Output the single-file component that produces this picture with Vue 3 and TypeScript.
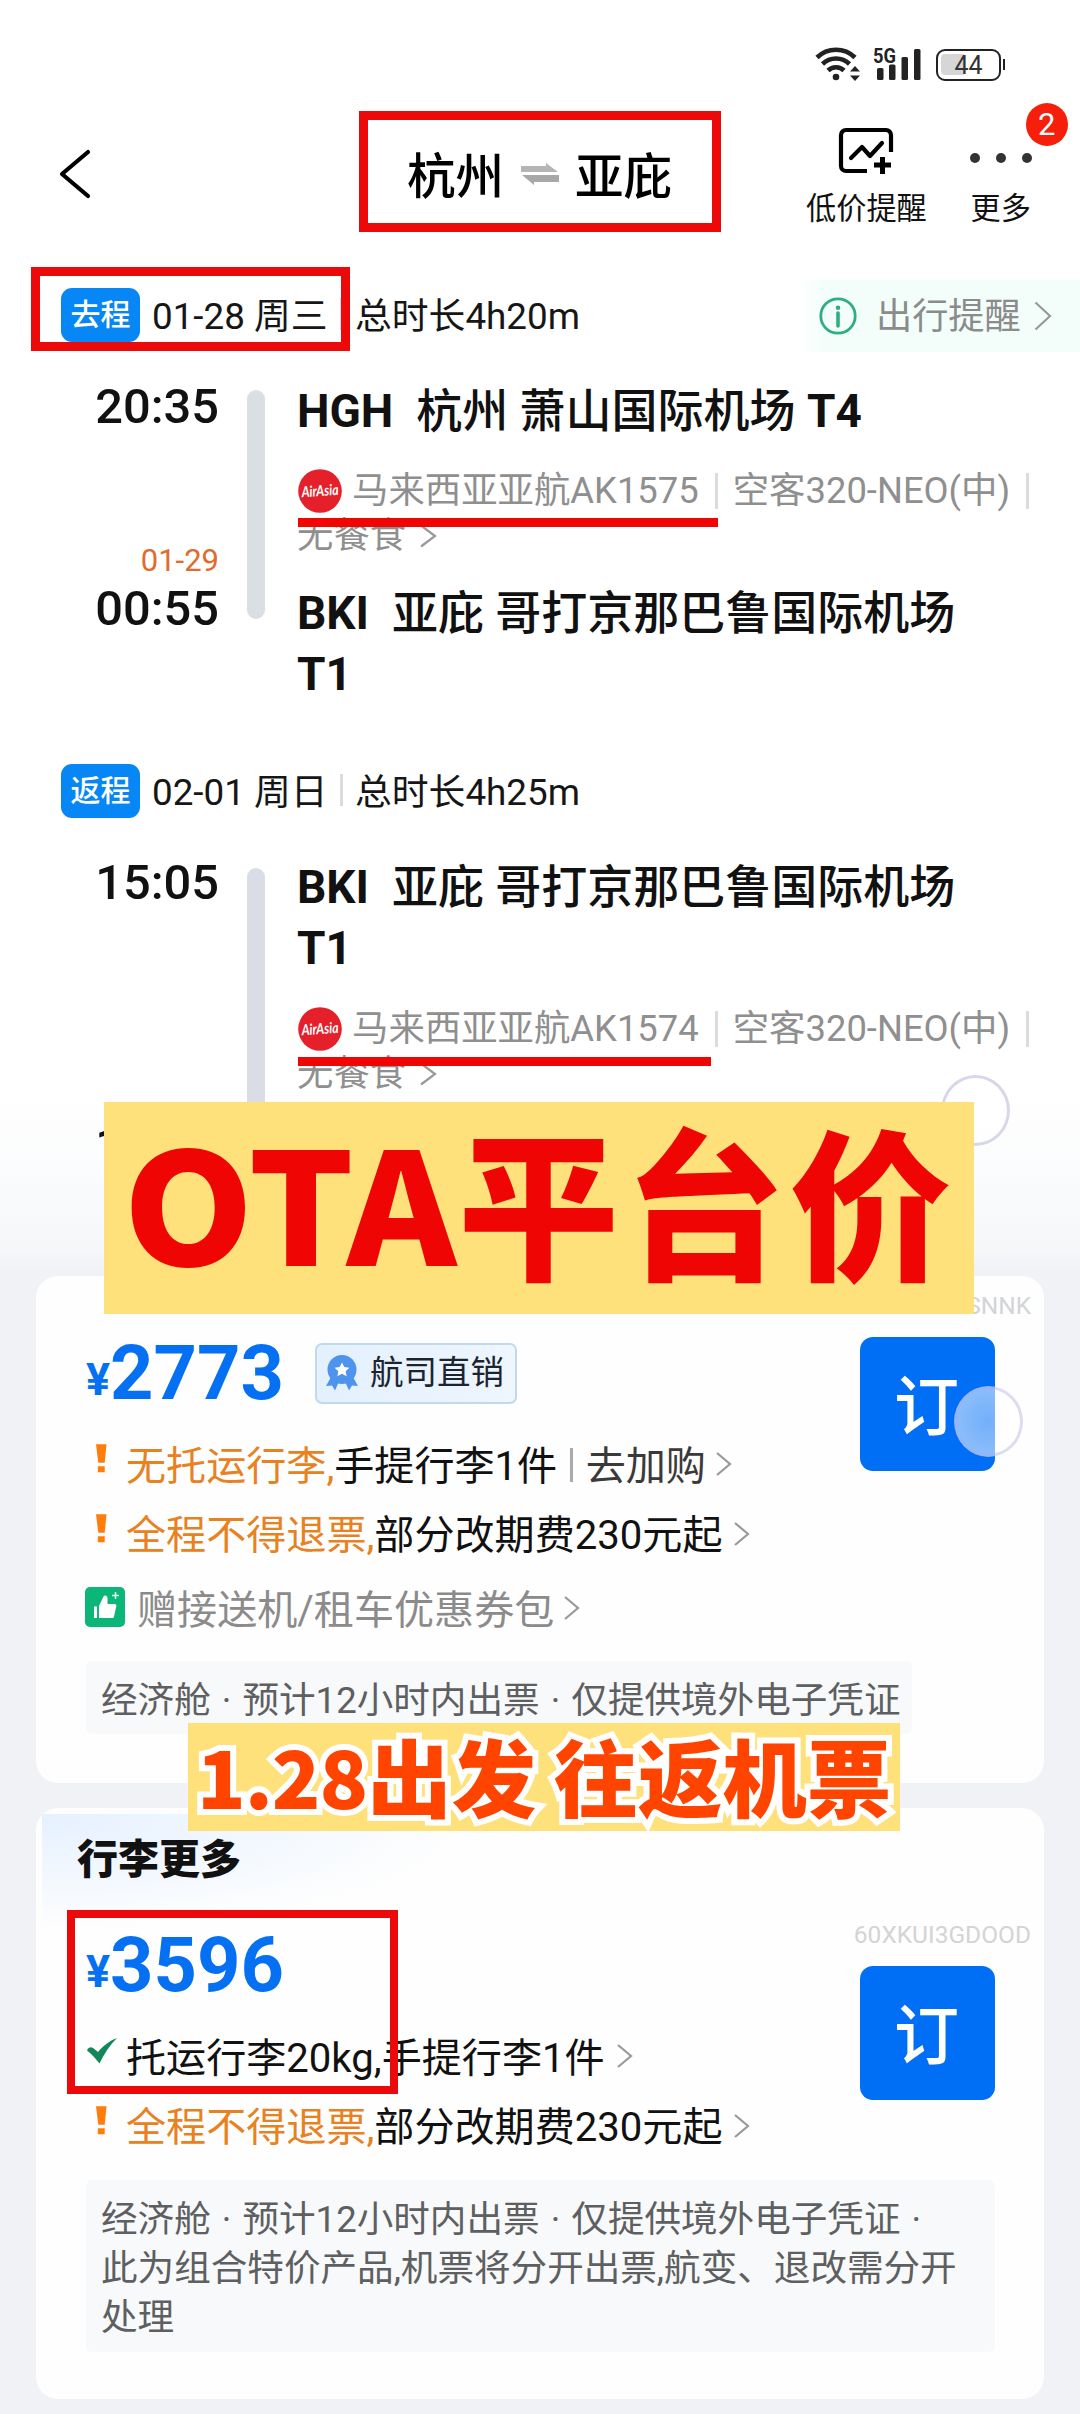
<script setup lang="ts">
interface Leg {
  kind: string
  date: string
  duration: string
  depart: string
  nextDay?: string
  arrive: string
  from: string[]
  to: string[]
  flight: string
}

interface FareLine {
  icon: 'warn' | 'check' | 'gift'
  accent?: string
  text: string
  link?: string
}

interface Fare {
  title?: string
  price: string
  badge?: string
  code: string
  lines: FareLine[]
  notes: string[]
}

const legs: Leg[] = [
  {
    kind: '去程',
    date: '01-28 周三',
    duration: '总时长4h20m',
    depart: '20:35',
    nextDay: '01-29',
    arrive: '00:55',
    from: ['HGH\u00a0 杭州 萧山国际机场 T4'],
    to: ['BKI\u00a0 亚庇 哥打京那巴鲁国际机场', 'T1'],
    flight: '马来西亚亚航AK1575',
  },
  {
    kind: '返程',
    date: '02-01 周日',
    duration: '总时长4h25m',
    depart: '15:05',
    arrive: '19:30',
    from: ['BKI\u00a0 亚庇 哥打京那巴鲁国际机场', 'T1'],
    to: [],
    flight: '马来西亚亚航AK1574',
  },
]

const fares: Fare[] = [
  {
    price: '2773',
    badge: '航司直销',
    code: 'SNNK',
    lines: [
      { icon: 'warn', accent: '无托运行李,', text: '手提行李1件', link: '去加购' },
      { icon: 'warn', accent: '全程不得退票,', text: '部分改期费230元起' },
      { icon: 'gift', text: '赠接送机/租车优惠券包' },
    ],
    notes: ['经济舱 · 预计12小时内出票 · 仅提供境外电子凭证'],
  },
  {
    title: '行李更多',
    price: '3596',
    code: '60XKUI3GDOOD',
    lines: [
      { icon: 'check', text: '托运行李20kg,手提行李1件' },
      { icon: 'warn', accent: '全程不得退票,', text: '部分改期费230元起' },
    ],
    notes: [
      '经济舱 · 预计12小时内出票 · 仅提供境外电子凭证 ·',
      '此为组合特价产品,机票将分开出票,航变、退改需分开',
      '处理',
    ],
  },
]

// Airport and terminal codes are set heavier than the airport name.
const parts = (line: string) =>
  line
    .split(/([A-Z]+\d*)/)
    .filter((t) => t !== '')
    .map((text) => ({ text, code: /^[A-Z]/.test(text) }))
</script>

<template>
  <div class="page">
    <div class="status">
      <svg class="wifi" viewBox="0 0 46 36">
        <g fill="none" stroke="#222" stroke-width="4.6">
          <path d="M2 11.5a27 27 0 0 1 38 0" />
          <path d="M7.5 18a19.500 19.500 0 0 1 27 0" />
          <path d="M13 24.500a11.500 11.500 0 0 1 16 0" />
        </g>
        <circle cx="21" cy="31" r="3.300" fill="#222" />
        <path d="M35 25.500l5-5.500 5 5.500zM35 29.500l5 5.500 5-5.500z" fill="#222" />
      </svg>
      <svg class="signal" viewBox="0 0 50 36">
        <text x="0" y="17" font-family="Roboto" font-weight="700" font-size="21" textLength="23" lengthAdjust="spacingAndGlyphs" fill="#222">5G</text>
        <g fill="#222">
          <rect x="4" y="22" width="6.500" height="12" rx="1.500" />
          <rect x="16" y="18.500" width="6.500" height="15.500" rx="1.500" />
          <rect x="28.500" y="11" width="6.500" height="23" rx="1.500" />
          <rect x="41" y="3" width="6.500" height="31" rx="1.500" />
        </g>
      </svg>
      <div class="battery"><span>44</span></div>
    </div>

    <header class="nav">
      <svg class="back" viewBox="0 0 34 52">
        <path d="M30 4L4 26L30 48" fill="none" stroke="#000" stroke-width="4.200" stroke-linecap="round" stroke-linejoin="round" />
      </svg>
      <div class="route">
        <span>杭州</span>
        <svg viewBox="0 0 38 22">
          <path d="M0 9V3H25V0L37 9z" fill="#b5b5b5" />
          <path d="M38 12V19H13V22L1 12z" fill="#a8a8a8" />
        </svg>
        <span>亚庇</span>
      </div>
      <div class="action alert">
        <svg viewBox="0 0 56 48">
          <g fill="none" stroke="#000" stroke-width="4.200">
            <path d="M53 25V8a5 5 0 0 0-5-5H8a5 5 0 0 0-5 5V39a5 5 0 0 0 5 5H29" />
            <path d="M13 31l11-11 8 9 12-13" stroke-linecap="round" stroke-linejoin="round" />
            <path d="M36 38H53M44.500 30V47" stroke-width="5" />
          </g>
        </svg>
        <span>低价提醒</span>
      </div>
      <div class="action more">
        <div class="dots"><i></i><i></i><i></i></div>
        <span>更多</span>
        <b class="count">2</b>
      </div>
    </header>

    <section v-for="(leg, i) in legs" :key="leg.kind" class="leg" :class="'leg-' + i">
      <div class="leg-head">
        <span class="tag">{{ leg.kind }}</span>
        <span class="date">{{ leg.date }}</span>
        <i class="sep"></i>
        <span>{{ leg.duration }}</span>
        <div v-if="i === 0" class="remind">
          <svg class="info" viewBox="0 0 40 40">
            <circle cx="20" cy="20" r="17.200" fill="none" stroke="#2fae80" stroke-width="2.800" />
            <circle cx="20" cy="11.800" r="2.300" fill="#2fae80" />
            <path d="M20 17V30" stroke="#2fae80" stroke-width="3.600" stroke-linecap="round" />
          </svg>
          <span>出行提醒</span>
          <svg class="chev" viewBox="0 0 18 30"><path d="M1.500 1.500L16 15L1.500 28.500" /></svg>
        </div>
      </div>
      <div class="leg-body">
        <div class="times">
          <span class="time">{{ leg.depart }}</span>
          <span class="next">{{ leg.nextDay }}</span>
          <span class="time">{{ leg.arrive }}</span>
        </div>
        <div class="rail"></div>
        <div class="stops">
          <div class="station">
            <p v-for="t in leg.from" :key="t"><span v-for="p in parts(t)" :key="p.text" :class="{ heavy: p.code }">{{ p.text }}</span></p>
          </div>
          <div class="flight">
            <div class="flight-row">
              <svg class="airline" viewBox="0 0 44 44">
                <circle cx="22" cy="22" r="21.800" fill="#e5202a" />
                <text x="3.500" y="27" font-family="Lato" font-style="italic" font-weight="700" font-size="15" textLength="37" lengthAdjust="spacingAndGlyphs" fill="#fff" transform="rotate(-4 22 22)">AirAsia</text>
              </svg>
              <span>{{ leg.flight }}</span>
              <i class="sep"></i>
              <span>空客320-NEO(中)</span>
              <i class="sep last"></i>
            </div>
            <div class="flight-row">
              <span>无餐食</span>
              <svg class="chev meal" viewBox="0 0 17 24"><path d="M1 1.500L15 12L1 22.500" /></svg>
            </div>
            <i class="underline"></i>
          </div>
          <div class="station">
            <p v-for="t in leg.to" :key="t"><span v-for="p in parts(t)" :key="p.text" :class="{ heavy: p.code }">{{ p.text }}</span></p>
          </div>
        </div>
      </div>
    </section>

    <main class="fares">
      <article v-for="(fare, i) in fares" :key="fare.code" class="card" :class="'card-' + i">
        <div class="card-top">
          <div class="offer">
            <h3 v-if="fare.title">{{ fare.title }}</h3>
            <div class="price-row">
              <span class="yen">¥</span><span class="price">{{ fare.price }}</span>
              <div v-if="fare.badge" class="badge">
                <svg viewBox="0 0 34 36">
                  <path d="M6 22L1 31l6-.5 3 5 4-9zM28 22l5 9-6-.5-3 5-4-9z" fill="#4e93ee" />
                  <circle cx="17" cy="14.500" r="14.500" fill="#4e93ee" />
                  <path d="M17 7.500l2.300 4.500 5 .7-3.600 3.500.9 5-4.600-2.400-4.600 2.400.9-5-3.600-3.500 5-.7z" fill="#fff" />
                </svg>
                <span>{{ fare.badge }}</span>
              </div>
            </div>
            <div v-for="line in fare.lines" :key="line.text" class="line" :class="line.icon">
              <svg v-if="line.icon === 'warn'" class="mark" viewBox="0 0 12 31">
                <path d="M0 0H11.500L9.500 20H2.500zM2 24H9.500V30.500H2z" fill="#ff7d0a" />
              </svg>
              <svg v-else-if="line.icon === 'check'" class="tick" viewBox="0 0 30 26">
                <path d="M0 12.500C1.500 9 4 8.500 6 10L11 14C16 8 22 3 30 0C23 7 17 16 12.500 25.500C9 21 5 16.500 0 12.500z" fill="#12875a" />
              </svg>
              <svg v-else class="thumb" viewBox="0 0 40 40">
                <rect width="40" height="40" rx="5" fill="#0bb678" />
                <path d="M9 19.500h3V31H9zM14 19L18.500 9.500C19.500 7.500 22.500 8.500 22.500 11V17H29.500C31 17 31.500 18 31.300 19.300L29 29.500C28.700 30.600 28 31 27 31H14z" fill="#fff" />
                <path d="M30.500 5v7M27 8.500h7" stroke="#d8fff0" stroke-width="1.600" />
              </svg>
              <span v-if="line.accent" class="accent">{{ line.accent }}</span>
              <span>{{ line.text }}</span>
              <template v-if="line.link">
                <i class="bar"></i><span class="link">{{ line.link }}</span>
              </template>
              <svg class="chev" viewBox="0 0 16 24"><path d="M1 1L14 12L1 23" /></svg>
            </div>
          </div>
          <div class="buy">
            <span class="code">{{ fare.code }}</span>
            <button>订</button>
          </div>
        </div>
        <div class="note"><p v-for="n in fare.notes" :key="n">{{ n }}</p></div>
      </article>
    </main>

    <i class="ring ring-top"></i>
    <i class="ring ring-buy"></i>

    <i class="frame frame-route"></i>
    <i class="frame frame-date"></i>
    <i class="frame frame-price"></i>
    <div class="banner"><span class="latin">OTA</span><span class="han">平台价</span></div>
    <div class="caption"><span class="num">1.28</span><span>出发</span><span class="second">往返机票</span></div>
  </div>
</template>

<style>
body {
  margin: 0;
}
</style>

<style scoped>
.page {
  position: relative;
  width: 1080px;
  height: 2414px;
  overflow: hidden;
  display: flex;
  flex-direction: column;
  font-family: Roboto, "Noto Sans CJK SC", sans-serif;
  color: #161616;
  background: linear-gradient(#fff 0, #fff 1090px, #fafbfc 1180px, #f6f7f9 1250px, #f0f2f6 1270px, #f1f2f6 100%);
}
p,
h3 {
  margin: 0;
}
svg {
  display: block;
  flex: none;
}
span {
  white-space: pre;
}
.chev path {
  fill: none;
  stroke: #999;
  stroke-width: 2.2;
}

/* status bar */
.status {
  height: 100px;
  box-sizing: border-box;
  padding: 46px 76px 0 0;
  display: flex;
  justify-content: flex-end;
}
.wifi {
  width: 46px;
  height: 36px;
  margin-right: 12px;
}
.signal {
  width: 50px;
  height: 36px;
  margin-right: 13px;
  overflow: visible;
}
.battery {
  position: relative;
  box-sizing: border-box;
  width: 65px;
  height: 32px;
  margin: 3px 3px 0 0;
  border: 2.5px solid #222;
  border-radius: 9px;
  padding: 2.5px;
  font-size: 25px;
  line-height: 23px;
  text-align: center;
  color: #333;
}
.battery::before {
  content: "";
  position: absolute;
  left: 3px;
  top: 3px;
  width: 23px;
  height: 21px;
  border-radius: 4px 0 0 4px;
  background: #d6d6d6;
}
.battery::after {
  content: "";
  position: absolute;
  right: -6px;
  top: 8px;
  width: 2.5px;
  height: 11px;
  background: #222;
}
.battery span {
  position: relative;
}

/* title bar */
.nav {
  height: 180px;
  display: flex;
  align-items: flex-start;
}
.back {
  width: 34px;
  height: 52px;
  margin: 48px 0 0 58px;
}
.route {
  display: flex;
  align-items: center;
  height: 60px;
  margin: 43px 0 0 315px;
  font-size: 48.5px;
  font-weight: 500;
  color: #000;
}
.route svg {
  width: 38px;
  height: 22px;
  margin: 1px 16px 0 17px;
}
.action {
  position: relative;
  display: flex;
  flex-direction: column;
  align-items: center;
  font-size: 30.2px;
  line-height: 36px;
  color: #111;
}
.alert {
  margin: 27px 0 0 134px;
}
.alert svg {
  width: 56px;
  height: 48px;
  margin-bottom: 16px;
}
.more {
  margin: 52px 0 0 43px;
}
.dots {
  display: flex;
  gap: 16px;
  height: 6px;
  margin-bottom: 33px;
}
.dots i {
  width: 10px;
  height: 10px;
  border-radius: 50%;
  background: #333;
  margin-top: 1px;
}
.count {
  position: absolute;
  left: 56px;
  top: -49px;
  width: 42px;
  height: 43px;
  border-radius: 50%;
  background: #f61f0c;
  color: #fff;
  font-weight: 400;
  font-size: 31px;
  line-height: 44px;
  text-align: center;
}

/* legs */
.leg {
  flex: none;
}
.leg-0 {
  height: 475px;
}
.leg-1 {
  height: 521px;
}
.leg-head {
  height: 72px;
  display: flex;
  align-items: center;
  padding-left: 61px;
  font-size: 36.8px;
  line-height: 44px;
}
.leg-head > span:not(.tag),
.remind > span {
  padding-top: 1px;
}
.leg-1 .leg-head {
  padding-top: 1px;
}
.tag {
  width: 79px;
  height: 54px;
  margin: -3px 12px 0 0;
  border-radius: 11px;
  background: #0787f5;
  color: #fff;
  font-size: 30px;
  font-weight: 500;
  line-height: 53px;
  text-align: center;
}
.date {
  width: 177px;
}
.sep {
  width: 3px;
  height: 32px;
  margin: -4px 12px 0 11px;
  background: #dcdcdc;
}
.remind {
  display: flex;
  align-items: center;
  height: 72px;
  flex: 1;
  margin-left: 220px;
  padding-left: 18px;
  background: linear-gradient(90deg, rgba(243, 254, 250, 0), #f3fefa 24px);
  color: #8b8b8b;
  font-size: 36.2px;
}
.info {
  width: 40px;
  height: 40px;
  margin-right: 18px;
}
.remind .chev {
  width: 18px;
  height: 30px;
  margin-left: 13px;
}
.leg-body {
  display: flex;
  padding-top: 23px;
}
.times {
  width: 219px;
  padding-top: 3.6px;
  display: flex;
  flex-direction: column;
  align-items: flex-end;
}
.leg-1 .times {
  padding-top: 4px;
}
.time {
  font-size: 48.8px;
  font-weight: 500;
  line-height: 56px;
  color: #111;
}
.next {
  height: 40px;
  margin-top: 106px;
  font-size: 31px;
  line-height: 40px;
  color: #df6c2c;
}
.leg-1 .next {
  margin-top: 167px;
}
.rail {
  width: 18px;
  height: 229px;
  margin: 15px 32px 0 28px;
  border-radius: 9px;
  background: #d9dfe2;
}
.leg-1 .rail {
  height: 300px;
  margin-top: 17px;
  background: #dadde5;
}
.stops {
  padding-top: 6px;
}
.station {
  font-size: 46px;
  font-weight: 500;
  line-height: 61px;
  color: #111;
}
.heavy {
  font-weight: 700;
}
.flight {
  position: relative;
  margin: 26px 0 25px;
  font-size: 36.4px;
  line-height: 45px;
  color: #8f8f8f;
}
.leg-1 .flight {
  margin-top: 27px;
}
.flight-row {
  display: flex;
  align-items: center;
  height: 45px;
}
.airline {
  width: 44px;
  height: 44px;
  margin: 0 10px 0 1px;
}
.flight .sep {
  height: 36px;
  margin: 0 15px 0 16px;
}
.meal {
  width: 17px;
  height: 24px;
  margin: 1px 0 0 14px;
}
.underline {
  position: absolute;
  left: 1px;
  top: 50px;
  width: 420px;
  height: 9px;
  background: #f00505;
}
.leg-1 .underline {
  top: 51px;
  width: 413px;
}

/* fares */
.fares {
  display: flex;
  flex-direction: column;
  gap: 25px;
  padding: 0 36px;
}
.card {
  box-sizing: border-box;
  border-radius: 22px;
  background: #fefefe;
}
.card-0 {
  height: 507px;
}
.card-1 {
  height: 591px;
  background: radial-gradient(ellipse 420px 110px at 6px 6px, #e6f1ff, rgba(254, 254, 254, 0)) 6px 6px no-repeat, #fefefe;
}
.card-top {
  display: flex;
  justify-content: space-between;
}
.offer {
  padding: 57px 0 0 50px;
}
.card-1 .offer {
  padding-top: 27px;
}
h3 {
  height: 50px;
  margin: 0 0 40px -9px;
  font-size: 41px;
  font-weight: 900;
  line-height: 50px;
  color: #111;
}
.price-row {
  display: flex;
  align-items: center;
  height: 80px;
  color: #0670f2;
  font-weight: 700;
}
.yen {
  width: 24px;
  font-size: 45px;
  margin-top: 12px;
}
.price {
  font-size: 75.8px;
}
.badge {
  box-sizing: border-box;
  display: flex;
  align-items: center;
  width: 202px;
  height: 61px;
  margin-left: 31px;
  padding-left: 8px;
  border: 2px solid #c0daea;
  border-radius: 7px;
  background: linear-gradient(90deg, #e3f0fd, #eef6fe);
  font-size: 33.5px;
  font-weight: 400;
  line-height: 50px;
  color: #1c2430;
}
.badge svg {
  width: 34px;
  height: 36px;
  margin-right: 11px;
}
.line {
  display: flex;
  align-items: center;
  height: 69.5px;
  font-size: 40.1px;
  color: #111;
}
.line span {
  padding-bottom: 5px;
}
.price-row + .line {
  margin-top: 17px;
}
.mark {
  width: 11px;
  height: 31px;
  margin: -12px 19px 0 10px;
}
.tick {
  width: 30px;
  height: 26px;
  margin: -12px 9px 0 1px;
}
.thumb {
  width: 40px;
  height: 40px;
  margin: -4px 12px 0 -1px;
}
.line.gift {
  height: 79px;
  color: #8b8b8b;
}
.line .accent {
  color: #e8811f;
}
.bar {
  width: 2.5px;
  height: 34px;
  margin: 0 13px 0 13px;
  background: #aaa;
}
.line .link {
  color: #3a3a3a;
}
.line .chev {
  width: 16px;
  height: 24px;
  margin: -1px 0 0 12px;
}
.link + .chev,
.line.gift .chev {
  margin-left: 10px;
}
.buy {
  display: flex;
  flex-direction: column;
  align-items: flex-end;
  padding: 15px 13px 0 0;
}
.card-1 .buy {
  padding-top: 112px;
}
.code {
  height: 30px;
  font-size: 24.5px;
  line-height: 30px;
  color: #d2d4d6;
}
button {
  box-sizing: border-box;
  width: 135px;
  height: 134px;
  margin: 16px 36px 0 0;
  padding: 8px 2px 0 0;
  border: 0;
  border-radius: 13px;
  background: #006ff6;
  color: #fff;
  font: 500 65px/126px Roboto, "Noto Sans CJK SC", sans-serif;
}
.note {
  box-sizing: border-box;
  width: 826px;
  margin: 13px 0 0 50px;
  padding: 15px 0 9px 15px;
  border-radius: 6px;
  background: #f8f9fa;
  font-size: 36.6px;
  line-height: 49px;
  word-spacing: 2px;
  color: #5d5f61;
  white-space: pre;
}
.card-1 .note {
  width: 909px;
  height: 172px;
  margin-top: 19px;
}

/* floating assistive rings */
.ring {
  position: absolute;
  box-sizing: border-box;
  width: 69px;
  height: 71px;
  border: 3px solid #d8d6ea;
  border-radius: 50%;
  background: rgba(255, 255, 255, 0.6);
}
.ring-top {
  left: 941px;
  top: 1075px;
}
.ring-buy {
  left: 954px;
  top: 1386px;
  border-color: rgba(170, 170, 220, 0.4);
  background: radial-gradient(rgba(255, 255, 255, 0.45), rgba(255, 255, 255, 0.58));
}

/* annotations */
.frame {
  position: absolute;
  box-sizing: border-box;
  border: 9px solid #ec0909;
}
.frame-route {
  left: 359px;
  top: 111px;
  width: 362px;
  height: 121px;
}
.frame-date {
  left: 31px;
  top: 267px;
  width: 319px;
  height: 84px;
}
.frame-price {
  left: 67px;
  top: 1910px;
  width: 331px;
  height: 184px;
  border-width: 8.5px;
}
.banner {
  position: absolute;
  left: 104px;
  top: 1102px;
  width: 870px;
  height: 212px;
  box-sizing: border-box;
  padding-left: 19px;
  display: flex;
  background: #fee17a;
  color: #f00505;
  font-family: "Noto Sans CJK SC", sans-serif;
  font-weight: 900;
  font-size: 156px;
  line-height: 192px;
}
.banner .latin {
  margin-right: 22px;
  transform: scaleX(1.065);
  transform-origin: left;
}
.banner .han {
  font-size: 161px;
  letter-spacing: 5px;
}
.caption {
  position: absolute;
  left: 188px;
  top: 1723px;
  width: 712px;
  height: 108px;
  box-sizing: border-box;
  padding-left: 9px;
  display: flex;
  background: #fee17a;
  color: #ff4400;
  font-family: "Noto Sans CJK SC", sans-serif;
  font-weight: 900;
  font-size: 84.5px;
  line-height: 103px;
  -webkit-text-stroke: 12px #fff;
  paint-order: stroke fill;
}
.num {
  font-size: 80px;
  letter-spacing: -1px;
}
.second {
  margin-left: 17px;
}
</style>
